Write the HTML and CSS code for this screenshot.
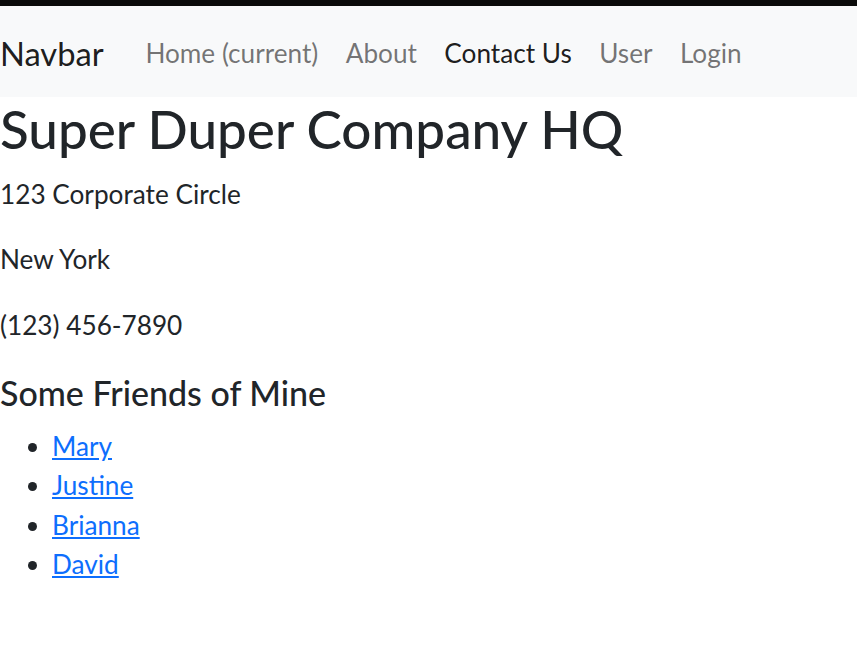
FILE: index.html
```html
<!DOCTYPE html>
<html lang="en">
<head>
<meta charset="utf-8">
<title>Super Duper Company HQ</title>
<link rel="stylesheet" href="styles.css">
</head>
<body>
<div class="topbar"></div>
<nav class="navbar">
  <a class="brand" href="#">Navbar</a>
  <ul class="nav">
    <li><a class="nav-link" href="#">Home (current)</a></li>
    <li><a class="nav-link" href="#">About</a></li>
    <li><a class="nav-link active" href="#">Contact Us</a></li>
    <li><a class="nav-link" href="#">User</a></li>
    <li><a class="nav-link" href="#">Login</a></li>
  </ul>
</nav>
<main class="content">
  <h1 class="title">Super Duper Company HQ</h1>
  <p class="line">123 Corporate Circle</p>
  <p class="line">New York</p>
  <p class="line">(123) 456-7890</p>
  <h4 class="subtitle">Some Friends of Mine</h4>
  <ul class="friends">
    <li><a href="#">Mary</a></li>
    <li><a href="#">Justine</a></li>
    <li><a href="#">Brianna</a></li>
    <li><a href="#">David</a></li>
  </ul>
</main>
</body>
</html>
```
FILE: styles.css
```css
html, body {
  margin: 0;
  padding: 0;
  background: #fff;
}
body {
  font-family: Lato, "Open Sans", sans-serif;
  font-size: 26.2px;
  line-height: 1.5;
  color: #212529;
}
.topbar {
  height: 6px;
  background: #0a0a0a;
}
.navbar {
  display: flex;
  align-items: center;
  background: #f8f9fa;
  padding: 14.5px 0 11.5px;
}
.brand {
  font-size: 32.7px;
  line-height: 1.5;
  padding: 5px 0;
  margin-right: 28px;
  color: rgba(0, 0, 0, 0.9);
  text-decoration: none;
}
.nav {
  display: flex;
  list-style: none;
  margin: 0;
  padding: 0;
}
.nav-link {
  display: block;
  padding: 13px 13.7px;
  color: rgba(0, 0, 0, 0.55);
  text-decoration: none;
}
.nav-link.active {
  color: rgba(0, 0, 0, 0.9);
}
.title {
  font-size: 53px;
  font-weight: 500;
  line-height: 1.2;
  margin: 0 0 14px;
}
.line {
  margin: 0 0 26.2px;
}
.subtitle {
  font-size: 34px;
  font-weight: 500;
  line-height: 1.2;
  margin: 27.5px 0 13.5px;
}
.friends {
  margin: 0 0 26px;
  padding-left: 52px;
}
.friends a {
  color: #0d6efd;
}
```
